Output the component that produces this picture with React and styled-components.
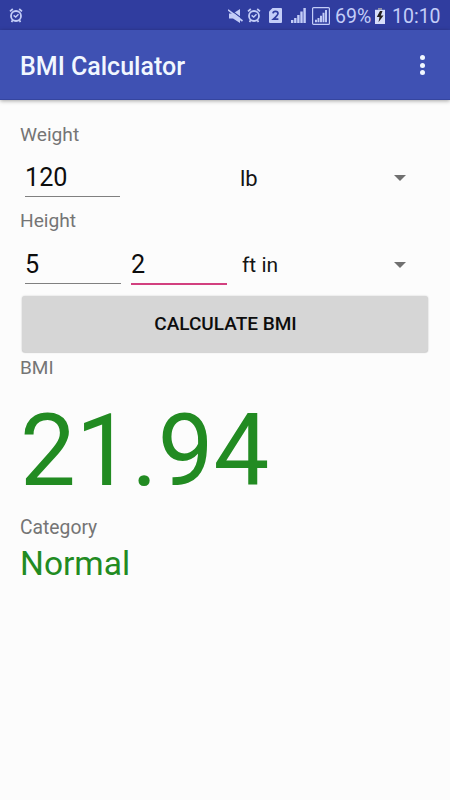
import React, { useState } from 'react';
import styled, { createGlobalStyle } from 'styled-components';

const GlobalStyle = createGlobalStyle`
  * {
    box-sizing: border-box;
  }
  body {
    margin: 0;
    background: #fcfcfc;
    font-family: Roboto, 'Liberation Sans', sans-serif;
  }
`;

const Screen = styled.div`
  width: 450px;
  height: 800px;
  overflow: hidden;
  background: #fcfcfc;
`;

const StatusBar = styled.div`
  display: flex;
  align-items: center;
  justify-content: space-between;
  height: 30px;
  padding: 1px 10px 0 9px;
  background: #303d9f;
  color: #c3cdf8;
`;

const StatusGroup = styled.div`
  display: flex;
  align-items: center;
`;

const StatusIcon = styled.svg`
  display: block;
  flex: none;
  margin-right: ${props => props.$gap || 0}px;
`;

const StatusText = styled.span`
  width: ${props => props.$width}px;
  margin-right: ${props => props.$gap || 0}px;
  padding-top: 2px;
  font-size: 19.5px;
  line-height: 26px;
  white-space: nowrap;
`;

const Toolbar = styled.header`
  display: flex;
  align-items: center;
  justify-content: space-between;
  height: 70px;
  padding: 1px 17px 0 20px;
  background: #3f51b3;
  border-bottom: 1px solid #35459f;
  box-shadow: 0 1px 4px rgba(0, 0, 0, 0.35);
`;

const Title = styled.h1`
  margin: 0;
  padding-top: 3px;
  color: #f1f7ff;
  font-size: 25px;
  font-weight: 500;
  line-height: 32px;
`;

const MenuButton = styled.button`
  display: flex;
  flex-direction: column;
  align-items: center;
  gap: 2.5px;
  width: 21px;
  padding: 0;
  border: 0;
  background: none;
`;

const Dot = styled.span`
  width: 5px;
  height: 5px;
  border-radius: 50%;
  background: #f1f7ff;
`;

const Form = styled.main`
  padding: 22px 20px 0;
`;

const Label = styled.div`
  height: 24px;
  color: #757575;
  font-size: ${props => props.$size || 19}px;
  line-height: ${props => props.$line || 25}px;
`;

const Row = styled.div`
  display: flex;
  align-items: flex-start;
  height: 63px;
  padding: 12px 20px 0 5px;
`;

const Field = styled.input`
  width: ${props => props.$width}px;
  height: ${props => (props.$active ? 40 : 39)}px;
  margin-right: ${props => props.$gap}px;
  padding: 1px 0 0;
  border: 0;
  border-bottom: ${props => (props.$active ? '2px solid #d2407f' : '1px solid #808080')};
  border-radius: 0;
  outline: none;
  background: transparent;
  color: #0d0d0d;
  font: 25.2px/37px Roboto, sans-serif;
`;

const Spinner = styled.div`
  display: flex;
  flex: 1;
  align-items: center;
  justify-content: space-between;
  height: 40px;
  color: #141414;
  font-size: ${props => props.$size || 22}px;
`;

const Arrow = styled.svg`
  display: block;
  margin-right: 4px;
`;

const CalculateButton = styled.button`
  display: block;
  width: 406px;
  height: 56px;
  margin: 0 0 3px 2px;
  padding: 0 0 0 1px;
  border: 0;
  border-radius: 3px;
  background: #d6d6d6;
  box-shadow: 0 0 2px rgba(0, 0, 0, 0.2), 0 1px 1px rgba(0, 0, 0, 0.12);
  color: #0d0d0d;
  font: 500 19px/24px Roboto, sans-serif;
  text-transform: uppercase;
`;

const Score = styled.div`
  height: 136px;
  padding-top: 8px;
  color: #228b22;
  font-size: 99.3px;
  line-height: 129px;
`;

const Category = styled.div`
  padding-top: 1px;
  color: #228b22;
  font-size: 33.5px;
  line-height: 48px;
`;

const AlarmIcon = ({ gap }) => (
  <StatusIcon $gap={gap} width="14" height="15" viewBox="0 0 14 15" fill="none" stroke="currentColor">
    <circle cx="7" cy="8" r="5" strokeWidth="1.8" />
    <path d="M1 3.4 3.8 1M13 3.4 10.2 1M3.6 12.2 2.6 14.2M10.4 12.2l1 2" strokeWidth="1.7" />
    <path d="M4.6 7.4 6.7 9.1 9.5 6.2" strokeWidth="1.4" />
  </StatusIcon>
);

const SignalBars = () => (
  <path d="M0 12h2.4v3H0zM3.1 10h2.4v5H3.1zM6.2 7h2.4v8H6.2zM9.3 3.5h2.4V15H9.3zM12.4 0h2.4v15h-2.4z" />
);

const DropArrow = () => (
  <Arrow width="12" height="6" viewBox="0 0 12 6" fill="#707070">
    <path d="M0 0h12L6 6z" />
  </Arrow>
);

const App = () => {
  const [weight, setWeight] = useState('120');
  const [feet, setFeet] = useState('5');
  const [inches, setInches] = useState('2');
  const [bmi, setBmi] = useState('21.94');

  const calculate = () => {
    const height = Number(feet) * 12 + Number(inches);
    if (height) {
      setBmi(((Number(weight) * 703) / (height * height)).toFixed(2));
    }
  };

  const getCategory = () => {
    if (bmi < 18.5) return 'Underweight';
    if (bmi < 25) return 'Normal';
    return bmi < 30 ? 'Overweight' : 'Obese';
  };

  return (
    <React.Fragment>
      <GlobalStyle />
      <Screen>
        <StatusBar>
          <AlarmIcon />
          <StatusGroup>
            {/* muted speaker */}
            <StatusIcon $gap={4} width="15" height="14" viewBox="0 0 15 14" fill="currentColor">
              <path d="M1 4.5h4L12 0v14L5 9.5H1z" />
              <path d="M1 -.2 15.5 10.6" stroke="#303d9f" strokeWidth="1.2" />
              <path d="M0 .8 14.5 12" stroke="currentColor" strokeWidth="1.7" />
            </StatusIcon>
            <AlarmIcon gap={8} />
            {/* second sim */}
            <StatusIcon $gap={9} width="13" height="15" viewBox="0 0 13 15">
              <path d="M3.5 0H12q1 0 1 1v13q0 1-1 1H1q-1 0-1-1V3.5z" fill="currentColor" />
              <path d="M4 5.4Q4.2 3.4 6.4 3.4 9 3.4 9 5.5 9 7 4.4 11.2H9.4" fill="none" stroke="#303d9f" strokeWidth="1.7" />
            </StatusIcon>
            <StatusIcon $gap={6} width="15" height="15" viewBox="0 0 15 15" fill="currentColor">
              <SignalBars />
            </StatusIcon>
            <StatusIcon $gap={5} width="18" height="18" viewBox="0 0 18 18" fill="currentColor">
              <rect x=".6" y=".6" width="16.8" height="16.8" rx="1" fill="none" stroke="currentColor" strokeWidth="1.2" />
              <g transform="translate(3 3) scale(.81)">
                <SignalBars />
              </g>
            </StatusIcon>
            <StatusText $width={36} $gap={4}>69%</StatusText>
            {/* charging battery */}
            <StatusIcon $gap={7} width="10" height="16" viewBox="0 0 10 16">
              <path d="M3 0h4v1.8H3z" fill="#8f93a8" />
              <path d="M0 1.8h10V16H0z" fill="#d7defa" />
              <path d="M5 3 1.8 9h2.7l-1 5.2L8.5 7.6H5.8L7.5 3z" fill="#252120" />
            </StatusIcon>
            <StatusText $width={48}>10:10</StatusText>
          </StatusGroup>
        </StatusBar>
        <Toolbar>
          <Title>BMI Calculator</Title>
          <MenuButton aria-label="More options">
            <Dot />
            <Dot />
            <Dot />
          </MenuButton>
        </Toolbar>
        <Form>
          <Label $size={19.2}>Weight</Label>
          <Row>
            <Field $width={95} $gap={120} value={weight} onChange={e => setWeight(e.target.value)} />
            <Spinner $size={22}>
              <span>lb</span>
              <DropArrow />
            </Spinner>
          </Row>
          <Label $size={19.2} $line={23}>Height</Label>
          <Row>
            <Field $width={96} $gap={10} value={feet} onChange={e => setFeet(e.target.value)} />
            <Field $active $width={96} $gap={15} value={inches} onChange={e => setInches(e.target.value)} />
            <Spinner $size={21}>
              <span>ft in</span>
              <DropArrow />
            </Spinner>
          </Row>
          <CalculateButton onClick={calculate}>Calculate BMI</CalculateButton>
          <Label>BMI</Label>
          <Score>{bmi}</Score>
          <Label $size={19.3}>Category</Label>
          <Category>{getCategory()}</Category>
        </Form>
      </Screen>
    </React.Fragment>
  );
};

export default App;
